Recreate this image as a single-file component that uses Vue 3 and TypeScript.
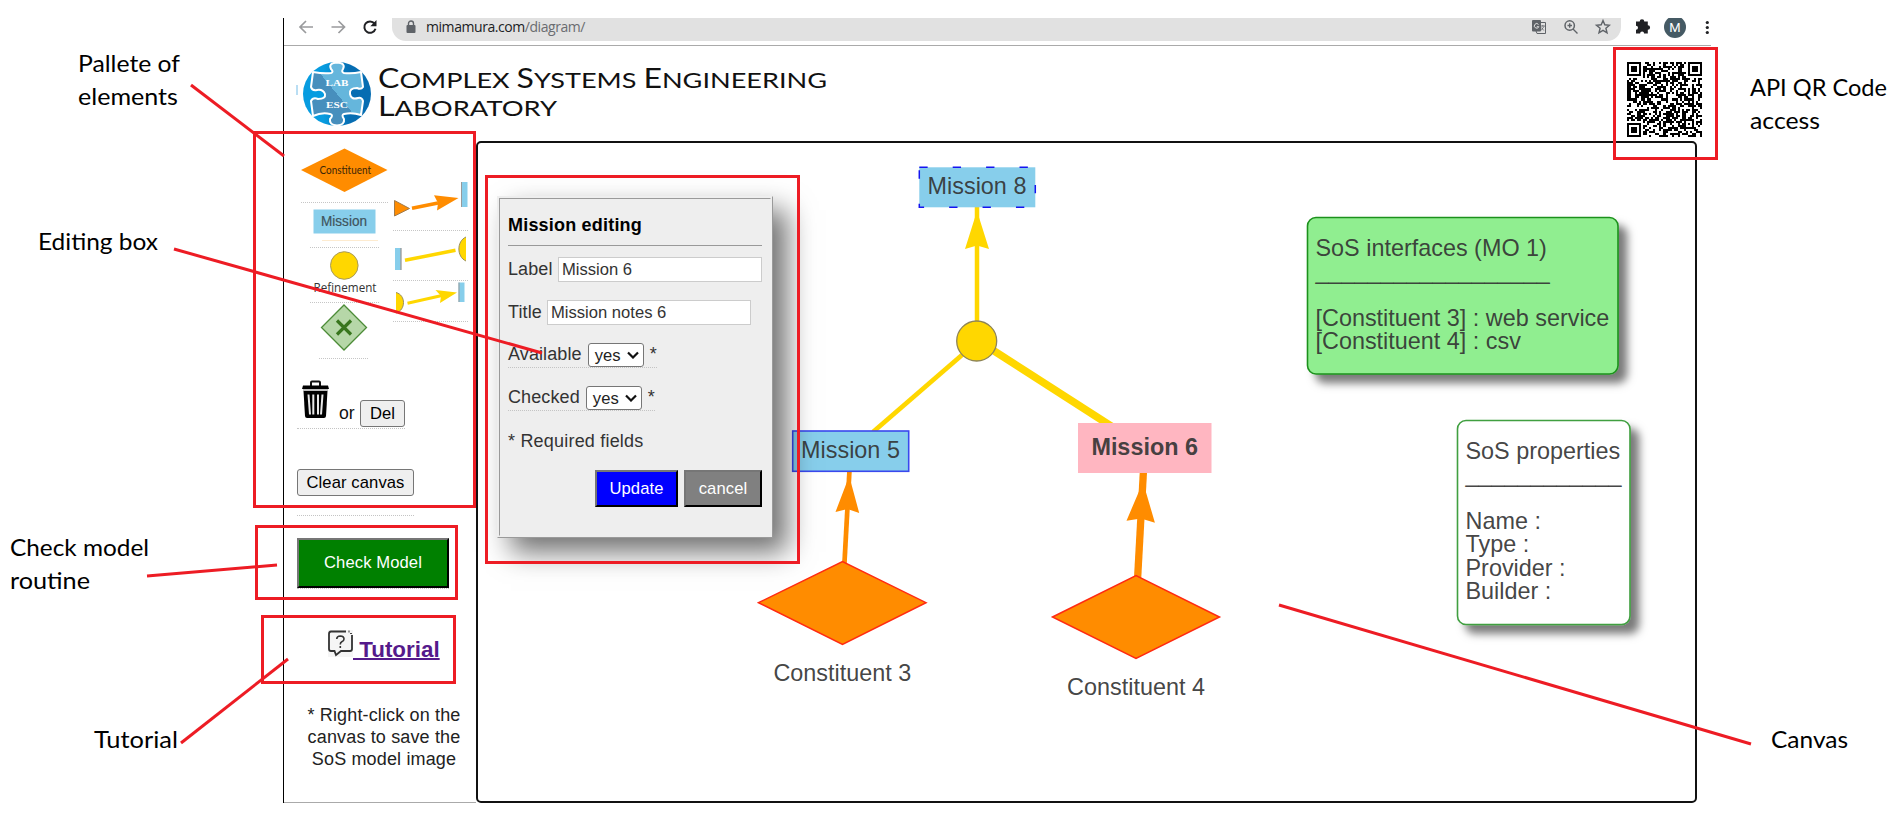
<script setup lang="ts">
import { ref } from 'vue'

interface Label { text: string; x: number; y: number; w: number }
interface Box { x: number; y: number; w: number; h: number }
interface Segment { x1: number; y1: number; x2: number; y2: number }
interface Field { name: string; value: string }

const callouts: Label[] = [
  { text: 'Pallete of', x: 78, y: 72, w: 102 },
  { text: 'elements', x: 78, y: 105, w: 100 },
  { text: 'Editing box', x: 38, y: 250, w: 120 },
  { text: 'Check model', x: 10, y: 556, w: 139 },
  { text: 'routine', x: 10, y: 589, w: 80 },
  { text: 'Tutorial', x: 94, y: 748, w: 84 },
  { text: 'API QR Code', x: 1750, y: 96, w: 137 },
  { text: 'access', x: 1750, y: 129, w: 70 },
  { text: 'Canvas', x: 1771, y: 748, w: 77 },
]

const frames: Box[] = [
  { x: 254.5, y: 132.5, w: 220, h: 374 },
  { x: 256.5, y: 526.5, w: 200, h: 72 },
  { x: 262.5, y: 616.5, w: 192, h: 66 },
  { x: 486.5, y: 176.5, w: 312, h: 386 },
  { x: 1614.5, y: 48.5, w: 102, h: 110 },
]

const pointers: Segment[] = [
  { x1: 191, y1: 85, x2: 284, y2: 156 },
  { x1: 174, y1: 249, x2: 542, y2: 353 },
  { x1: 147, y1: 576, x2: 277, y2: 565 },
  { x1: 181, y1: 743, x2: 288, y2: 659 },
  { x1: 1279, y1: 605, x2: 1751, y2: 744 },
]

const fields = ref<Field[]>([
  { name: 'Label', value: 'Mission 6' },
  { name: 'Title', value: 'Mission notes 6' },
])
const flags = ['Available', 'Checked']

const properties = ['Name :', 'Type :', 'Provider :', 'Builder :']

const SIZE = 37

function finder(x: number, y: number): boolean | null {
  for (const [fx, fy] of [[0, 0], [SIZE - 7, 0], [0, SIZE - 7]]) {
    const dx = x - fx
    const dy = y - fy
    if (dx >= -1 && dx <= 7 && dy >= -1 && dy <= 7) {
      const ring = Math.max(Math.abs(dx - 3), Math.abs(dy - 3))
      return ring <= 1 || ring === 3
    }
  }
  return null
}

function qrPath(): string {
  let seed = 77213
  let d = ''
  for (let y = 0; y < SIZE; y++) {
    for (let x = 0; x < SIZE; x++) {
      seed = (seed * 1103515 + 12345) % 2147483648
      const fixed = finder(x, y)
      let dark = fixed ?? ((seed >> 12) % 100) < 54
      const ring = Math.max(Math.abs(x - 30), Math.abs(y - 30))
      if (ring <= 2) dark = ring !== 1
      if (dark) d += `M${x} ${y}h1v1h-1z`
    }
  }
  return d
}
const qr = qrPath()
</script>

<template>
  <div class="page">
    <div class="window">
      <div class="toolbar">
        <svg class="nav" width="108" height="27" viewBox="284 18 108 27" fill="none">
          <g stroke="#9a9b9d" stroke-width="1.7">
            <path d="M313 27H300.500M306 21L300 27L306 33" />
            <path d="M331.500 27H344.500M338.500 21L344.500 27L338.500 33" />
          </g>
          <path d="M374.500 23.500A5.700 5.700 0 1 0 375.500 28.800" stroke="#202124" stroke-width="2" />
          <path d="M376.500 20V26.200H370.300Z" fill="#202124" />
        </svg>
        <div class="address">
          <svg class="lock" width="10" height="14" viewBox="0 0 10 14">
            <path d="M2.500 6V3.500a2.500 2.500 0 0 1 5 0V6" fill="none" stroke="#5f6368" stroke-width="1.400" />
            <rect x="0.500" y="5" width="9" height="8" rx="1" fill="#5f6368" />
          </svg>
          <span class="url">mimamura.com<i>/diagram/</i></span>
          <svg class="tools" width="80" height="23" viewBox="1531 18 80 23" fill="none">
            <rect x="1532" y="20" width="9" height="11.500" rx="1" fill="#5f6368" />
            <path d="M1540 22.500H1545.500V33.500H1537L1536 31" stroke="#5f6368" />
            <path d="M1538.500 24.500a2.300 2.300 0 1 0 .3 2.200h-2" stroke="#e1e1e1" />
            <path d="M1540.500 26h4.500M1542.800 25v1.500M1544 26.500l-3 4M1541.300 27.500l2.500 3" stroke="#5f6368" stroke-width=".8" />
            <circle cx="1569.700" cy="25.500" r="4.700" stroke="#5f6368" stroke-width="1.500" />
            <path d="M1573 29L1577.500 33.500M1567.500 25.500h4.500M1569.700 23.300v4.500" stroke="#5f6368" stroke-width="1.400" />
            <path d="M1603 20.500l1.800 4.300 4.700.4-3.600 3 1.100 4.600-4-2.500-4 2.500 1.100-4.600-3.600-3 4.700-.4z" stroke="#5f6368" stroke-width="1.400" />
          </svg>
        </div>
        <svg class="menu" width="89" height="27" viewBox="1621 18 89 27">
          <path d="M1636 21.500h3.700a2.300 2.300 0 0 1 4.600 0h3.500v3.700a2.300 2.300 0 0 1 0 4.600v3.700h-3.700a2 2 0 0 0-4 0H1636v-3.800a2 2 0 0 0 0-4z" fill="#202124" />
          <circle cx="1675" cy="27" r="11" fill="#455a64" />
          <text x="1675" y="31.500" text-anchor="middle" class="avatar">M</text>
          <g fill="#202124"><circle cx="1707.300" cy="22.500" r="1.600" /><circle cx="1707.300" cy="27.500" r="1.600" /><circle cx="1707.300" cy="32.500" r="1.600" /></g>
        </svg>
      </div>

      <header class="header">
        <svg width="560" height="80" viewBox="290 52 560 80">
          <defs>
            <linearGradient id="globe" x1="0" x2="1">
              <stop offset=".3" stop-color="#079ce0" /><stop offset=".7" stop-color="#066db2" />
            </linearGradient>
            <linearGradient id="piece" x1="0" y1="1" x2="1" y2="0">
              <stop offset=".5" stop-color="#478fbd" /><stop offset=".5" stop-color="#65b6dc" />
            </linearGradient>
          </defs>
          <path d="M297 85v10" stroke="#75bde8" />
          <ellipse cx="337" cy="94" rx="34" ry="32" fill="url(#globe)" />
          <path d="M313 72Q324 74 331 73Q334 72 331 69Q328 63 337 62.500Q346 63 343 69Q341 72 344 73Q352 74 361 72L363 87Q361 90 357 88Q349 88 350 94Q351 100 358 98Q362 97 363 101L361 115Q352 112 344 114Q341 115 344 119Q345 125 337 125.500Q329 125 330 119Q334 115 330 114Q322 112 313 116L311 101Q313 97 318 99Q326 99 325 94Q323 89 317 90Q312 91 311 87Z" fill="url(#piece)" stroke="#fff" stroke-width="2" stroke-linejoin="round" />
          <text x="337" y="86" text-anchor="middle" class="crest" textLength="23" lengthAdjust="spacingAndGlyphs">LAB</text>
          <text x="337" y="107.500" text-anchor="middle" class="crest" textLength="22" lengthAdjust="spacingAndGlyphs">ESC</text>
          <g class="brand">
            <text x="378" y="87.500" textLength="449" lengthAdjust="spacingAndGlyphs"><tspan class="cap">C</tspan>OMPLEX <tspan class="cap">S</tspan>YSTEMS <tspan class="cap">E</tspan>NGINEERING</text>
            <text x="378" y="115.500" textLength="179" lengthAdjust="spacingAndGlyphs"><tspan class="cap">L</tspan>ABORATORY</text>
          </g>
        </svg>
        <svg class="qr" width="75" height="75" viewBox="0 0 37 37" shape-rendering="crispEdges"><path :d="qr" /></svg>
      </header>

      <div class="body">
        <aside class="sidebar">
          <svg class="palette" width="192" height="220" viewBox="284 141 192 220">
            <path d="M301 170L344.500 148.500L387.500 170L344.500 192Z" fill="#ff8c00" />
            <text x="319.500" y="173.800" class="tiny" textLength="51.500" lengthAdjust="spacingAndGlyphs">Constituent</text>
            <rect x="313.500" y="209.500" width="62" height="24" fill="#87ceeb" />
            <text x="321" y="226" class="mission" textLength="46" lengthAdjust="spacingAndGlyphs">Mission</text>
            <path d="M322 240.500h56" stroke="#fdebd0" />
            <circle cx="344.300" cy="265.500" r="13.800" fill="#ffd700" stroke="#a89a5a" />
            <text x="313.500" y="292" class="refine" textLength="63" lengthAdjust="spacingAndGlyphs">Refinement</text>
            <path d="M344 305L366.500 327.500L344 350L321.500 327.500Z" fill="#b6d7a8" stroke="#4c8c37" stroke-width="1.300" />
            <path d="M337 320.500l14 14M351 320.500l-14 14" stroke="#38761d" stroke-width="3.200" />
            <path d="M394.500 200.500L409.500 208.500L394.500 216Z" fill="#ff8c00" stroke="#a17a4a" />
            <path d="M412 208.200L438 203" stroke="#ff8c00" stroke-width="3.600" />
            <path d="M458.500 198L434 195.200L438 203L437 210.500Z" fill="#ff8c00" />
            <path d="M461 182h6.500v25H461z" fill="#87ceeb" /><path d="M461.500 182v25" stroke="#999" />
            <path d="M395 248h6v22h-6z" fill="#87ceeb" /><path d="M401 248v22" stroke="#999" stroke-width="1.300" />
            <path d="M405 260.300L455.500 250.300" stroke="#ffd700" stroke-width="3.500" />
            <path d="M466 237C456.500 241 456.500 257 466 261Z" fill="#ffd700" /><path d="M466 237C456.500 241 456.500 257 466 261" fill="none" stroke="#998f60" />
            <path d="M396 292.500C406 295 406 310 396 313Z" fill="#ffd700" /><path d="M396 292.500C406 295 406 310 396 313" fill="none" stroke="#998f60" />
            <path d="M407.500 303.300L442 295.500" stroke="#ffd700" stroke-width="3" />
            <path d="M457 292.500L435.500 290L441 296L440 303Z" fill="#ffd700" />
            <path d="M458.500 282.500h6v19.500h-6z" fill="#87ceeb" /><path d="M459 282.500v19.500" stroke="#999" />
            <g stroke="#c6c6c6" stroke-dasharray="1 1">
              <path d="M301 202.500h87M310 247.500h69M310 302.500h69M319 358.500h50M393 230.500h75M393 280.500h75M393 321.500h75" />
            </g>
          </svg>

          <div class="dotted bin">
            <svg width="29" height="39" viewBox="0 0 29 39">
              <path d="M10 6V2.500Q10 1.500 11 1.500H18Q19 1.500 19 2.500V6" fill="none" stroke="#111" stroke-width="2" />
              <path d="M2 5.500H27L28 9H1Z" /><path d="M2 10H27" stroke="#999" stroke-width="1.300" />
              <path d="M2.500 11H26.500L25 36Q24.800 38 23 38H6Q4.200 38 4 36Z" />
              <path d="M7.500 14.500L9 34.500M12.300 14.500V34.500M17 14.500V34.500M21.500 14.500L20 34.500" stroke="#e8e8e8" stroke-width="2" />
            </svg>
            <span class="or">or</span>
            <button class="plain del">Del</button>
          </div>
          <div class="dotted clear"><button class="plain">Clear canvas</button></div>
          <div class="dotted check"><button class="bevel green">Check Model</button></div>

          <a class="tutorial">
            <svg width="25" height="27" viewBox="0 0 25 27">
              <rect width="25" height="27" fill="#f5f5f5" />
              <path d="M18 1.500H3Q1 1.500 1 4V19Q1 21 3 21H6.500L8 25L13 21H22Q24 21 24 19V5M20.500 1.500h1M23 3v1" fill="none" stroke="#333" stroke-width="1.800" />
              <path d="M8.700 9Q9 6 12.300 6Q16 6.200 16 9Q16 10.800 13.800 11.800Q12.300 12.500 12.300 14.500M12.300 16v2" fill="none" stroke="#333" stroke-width="1.600" />
            </svg><span>&nbsp;Tutorial</span>
          </a>
          <p class="note">* Right-click on the<br />canvas to save the<br />SoS model image</p>
        </aside>

        <main class="canvas">
          <svg class="diagram" width="1217" height="658" viewBox="478 143 1217 658">
            <defs>
              <filter id="lift" x="-10%" y="-10%" width="125%" height="130%">
                <feDropShadow dx="8.500" dy="8.500" stdDeviation="4.500" flood-color="#000" flood-opacity=".52" />
              </filter>
            </defs>
            <g stroke="#ffd700">
              <path d="M977 341V207" stroke-width="4.500" />
              <path d="M977 342L873 432" stroke-width="4.700" />
              <path d="M977 340L1125 435" stroke-width="7.500" />
            </g>
            <path d="M977 211L989 249L977 245.500L965 249Z" fill="#ffd700" />
            <g stroke="#ff8c00">
              <path d="M844.300 566L849.500 470" stroke-width="4.700" />
              <path d="M1137.500 580L1143.500 470" stroke-width="7.300" />
            </g>
            <path d="M849.200 476L859.200 513L847.500 509L835.500 512Z" fill="#ff8c00" />
            <path d="M1143 482L1154.900 522.700L1141 518.500L1126.500 520.700Z" fill="#ff8c00" />

            <circle cx="976.700" cy="341" r="20" fill="#ffd700" stroke="#8d8458" stroke-width="1.300" />
            <rect x="919.300" y="167.300" width="116" height="40" fill="#87ceeb" />
            <rect x="919.300" y="167.300" width="116" height="40" fill="none" stroke="#1414f0" stroke-width="1.500" stroke-dasharray="8.350 25.050" />
            <rect x="792.700" y="431" width="116" height="40.300" fill="#87ceeb" stroke="#3a48ee" stroke-width="1.600" />
            <rect x="1078" y="423" width="133.500" height="50" fill="#ffb6c1" />
            <g fill="#ff8c00" stroke="#ff2a12" stroke-width="1.500">
              <path d="M758.500 602.700L842.500 561.500L926 602.700L842.500 644.500Z" />
              <path d="M1052.500 617L1136 575.500L1219.500 617L1136 658.500Z" />
            </g>
            <g class="ink" text-anchor="middle">
              <text x="977" y="193.700">Mission 8</text>
              <text x="850.500" y="457.700">Mission 5</text>
              <text x="1144.700" y="454.700" class="bold">Mission 6</text>
              <text x="842.300" y="680.500">Constituent 3</text>
              <text x="1136" y="694.500">Constituent 4</text>
            </g>

            <rect x="1307.500" y="217.500" width="310.500" height="156.500" rx="8.500" fill="#90ee90" stroke="#1c911c" stroke-width="1.600" filter="url(#lift)" />
            <rect x="1457.500" y="420.500" width="172.500" height="204" rx="8.500" fill="#fff" stroke="#3f9f3f" stroke-width="1.600" filter="url(#lift)" />
            <g class="ink">
              <text x="1315.500" y="255.700">SoS interfaces (MO 1)</text>
              <text x="1315.500" y="279">__________________</text>
              <text x="1315.500" y="326">[Constituent 3] : web service</text>
              <text x="1315.500" y="349">[Constituent 4] : csv</text>
              <text x="1465.500" y="458.500">SoS properties</text>
              <text x="1465.500" y="482">____________</text>
              <text v-for="(p, i) in properties" :key="p" x="1465.500" :y="528.7 + i * 23.5">{{ p }}</text>
            </g>
          </svg>

          <form class="dialog" @submit.prevent>
            <h2>Mission editing</h2>
            <div v-for="f in fields" :key="f.name" class="row">
              <label>{{ f.name }}</label><input v-model="f.value" />
            </div>
            <div v-for="f in flags" :key="f" class="row">
              <span class="pick">
                <label>{{ f }}</label>
                <span class="select">yes
                  <svg width="12" height="8" viewBox="0 0 12 8"><path d="M1 1.500L6 6.500L11 1.500" fill="none" stroke="#111" stroke-width="2.200" /></svg>
                </span>
                <span class="star">*</span>
              </span>
            </div>
            <div class="row last">* Required fields</div>
            <div class="actions">
              <button class="bevel blue">Update</button>
              <button class="bevel gray">cancel</button>
            </div>
          </form>
        </main>
      </div>
    </div>

    <svg class="notes" width="1904" height="820" viewBox="0 0 1904 820">
      <g fill="none" stroke="#ed1c24" stroke-width="3">
        <rect v-for="(b, i) in frames" :key="'f' + i" :x="b.x" :y="b.y" :width="b.w" :height="b.h" />
        <line v-for="(s, i) in pointers" :key="'p' + i" :x1="s.x1" :y1="s.y1" :x2="s.x2" :y2="s.y2" />
      </g>
      <text v-for="c in callouts" :key="c.text" class="callout" :x="c.x" :y="c.y" :textLength="c.w" lengthAdjust="spacingAndGlyphs">{{ c.text }}</text>
    </svg>
  </div>
</template>

<style>
body { margin: 0; background: #fff; }
</style>

<style scoped>
.page { position: relative; width: 1904px; height: 820px; overflow: hidden; background: #fff; font-family: "Liberation Sans", Arial, sans-serif; color: #111; }
.page * { box-sizing: border-box; }
svg { display: block; flex: none; }
.window { width: 1428px; height: 785px; margin: 18px 0 0 283px; border-left: 1px solid #000; }
.toolbar { display: flex; height: 28px; width: 1427px; border-bottom: 1px solid #aaa; overflow: hidden; }
.address { display: flex; align-items: center; width: 1229px; height: 23px; padding: 0 10px 5px 14px; background: #e1e1e1; border-radius: 0 0 14px 14px; }
.lock { margin-right: 10px; }
.url { flex: 1; font: 14px/18px "Open Sans", "Noto Sans", sans-serif; letter-spacing: -0.44px; color: #202124; }
.url i { font-style: normal; color: #6a6c70; }
.tools { margin-top: 5px; }
.avatar { font: 13px Roboto, sans-serif; fill: #fff; }
.header { display: flex; justify-content: space-between; height: 95px; padding: 6px 9px 0 6px; }
.crest { font: bold 9px "Liberation Serif", serif; fill: #fff; }
.brand { font: 22px Lato, sans-serif; fill: #111; }
.cap { font-size: 26px; }
.qr { margin-top: 10px; }
.body { display: flex; height: 662px; }
.sidebar { display: flex; flex-direction: column; align-items: flex-start; width: 192px; border-bottom: 1px solid #aaa; }
.tiny { font: 10.5px Lato, sans-serif; fill: #3a2508; }
.mission { font: 14px "Liberation Sans", sans-serif; fill: #40545c; stroke: #40545c; stroke-width: .2px; }
.refine { font: 12.500px "Open Sans", sans-serif; fill: #333; }
.dotted { margin-left: 13px; border-bottom: 1px dotted #c4c4c4; }
.bin { display: flex; align-items: flex-end; width: 108px; height: 48px; margin-top: 20px; padding: 0 0 1px 4px; font-size: 17.600px; }
.bin svg { margin-bottom: 8px; }
.or { margin: 0 0 4px 9px; line-height: 20px; }
.plain { height: 27px; width: 117px; padding: 0; border: 1px solid #767676; border-radius: 3px; background: #efefef; font: 16.600px "Liberation Sans", Arial, sans-serif; letter-spacing: 0.1px; color: #000; }
.del { width: 45px; margin-left: auto; }
.clear { height: 47px; margin-top: 40px; }
.check { height: 51px; margin-top: 22px; }
.bevel { padding: 0; border: 2px outset #767676; border-color: #767676 #212121 #212121 #767676; font: 16.600px "Liberation Sans", Arial, sans-serif; letter-spacing: 0.1px; color: #fff; }
.green { display: block; width: 152px; height: 50px; background: #008000; }
.tutorial { display: flex; margin: 41px 0 0 44px; color: #551a8b; font-weight: bold; font-size: 22.400px; }
.tutorial span { margin-top: 7px; line-height: 25px; text-decoration: underline; text-decoration-thickness: 2px; }
.note { width: 100%; margin: 42px 0 0 4px; text-align: center; font-size: 18px; letter-spacing: 0.15px; line-height: 22px; color: #222; }
.canvas { position: relative; width: 1221px; height: 662px; border: 2px solid #111; border-radius: 5px; }
.ink { font: 23.400px "Liberation Sans", Arial, sans-serif; fill: #343434; fill-opacity: .93; }
.bold { font-weight: bold; }
.dialog { position: absolute; left: 19px; top: 53px; width: 276px; height: 342px; padding: 0 8px; border: 3px ridge #eee; background: #eee; box-shadow: 14px 14px 26px rgba(0, 0, 0, .56); font-size: 18px; color: #333; }
h2 { height: 47px; margin: 0 0 11px; padding-top: 15px; border-bottom: 1px solid #999; font-size: 18px; line-height: 22px; color: #000; letter-spacing: 0.2px; }
.row { display: flex; align-items: flex-start; height: 43px; line-height: 24px; letter-spacing: 0.1px; }
.row label { flex: none; }
.last { height: 41px; letter-spacing: 0.2px; }
input { width: 204px; height: 25px; margin-left: auto; padding: 0 3px; border: 1px solid #ccc; background: #fff; font: 16.600px "Liberation Sans", Arial, sans-serif; color: #333; }
.row:nth-of-type(2) input { margin-right: 11px; }
.pick { display: flex; height: 25px; border-bottom: 1px dotted #c4c4c4; line-height: 23px; }
.select { display: flex; align-items: center; gap: 6px; width: 56px; height: 24px; margin: 0 6px; padding: 0 0 0 6px; border: 1px solid #767676; border-radius: 3px; background: #fff; font-size: 16.600px; color: #222; }
.actions { display: flex; justify-content: flex-end; gap: 6px; }
.blue { width: 83px; height: 37px; background: #00f; }
.gray { width: 78px; height: 37px; background: #808080; }
.notes { position: absolute; left: 0; top: 0; pointer-events: none; }
.callout { font: 24px Lato, Carlito, sans-serif; fill: #000; }
</style>
